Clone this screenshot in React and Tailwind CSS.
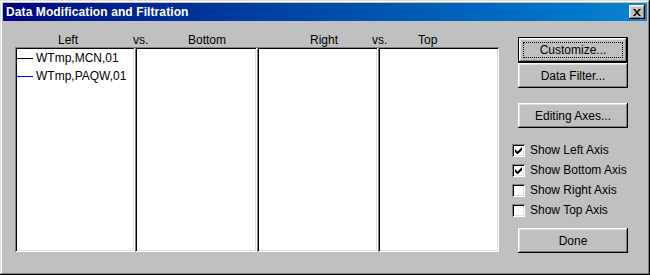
import React from "react";

const raised =
  "shadow-[inset_-1px_-1px_#000,inset_1px_1px_#fff,inset_-2px_-2px_#808080,inset_2px_2px_#dfdfdf]";
const sunken =
  "shadow-[inset_1px_1px_#808080,inset_-1px_-1px_#fff,inset_2px_2px_#000,inset_-2px_-2px_#dfdfdf]";

function Button({ children, isDefault, className = "" }) {
  if (isDefault) {
    return (
      <div className={`w-[110px] h-[26px] border border-black ${className}`}>
        <div className={`h-full bg-[#c0c0c0] ${raised} p-[4px]`}>
          <div className="h-full border border-dotted border-black flex items-center justify-center">
            {children}
          </div>
        </div>
      </div>
    );
  }
  return (
    <div
      className={`w-[110px] h-[25px] bg-[#c0c0c0] ${raised} flex items-center justify-center ${className}`}
    >
      {children}
    </div>
  );
}

function Check({ label, checked }) {
  return (
    <div className="h-[20px] flex items-center gap-[5px]">
      <div className={`w-[13px] h-[13px] bg-white ${sunken} flex items-center justify-center`}>
        {checked && (
          <svg width="7" height="7" viewBox="0 0 7 7">
            <path d="M0 2v3l2 2h1l4-4V0L2.5 4.5z" fill="#000" />
          </svg>
        )}
      </div>
      <span>{label}</span>
    </div>
  );
}

function ListBox({ w, children }) {
  return (
    <div className={`${w} h-[205px] bg-white ${sunken} pt-[2px] pl-[2px]`}>{children}</div>
  );
}

export default function App() {
  return (
    <div
      className="w-[650px] h-[275px] bg-[#c0c0c0] p-[3px] text-[12px] text-black shadow-[inset_-1px_-1px_#000,inset_1px_1px_#dfdfdf,inset_-2px_-2px_#808080,inset_2px_2px_#fff] flex flex-col"
      style={{ fontFamily: '"Liberation Sans", Arial, sans-serif' }}
    >
      <div className="h-[18px] bg-gradient-to-r from-[#000080] to-[#1084d0] flex items-center justify-between pl-[3px] pr-[2px]">
        <span className="text-white font-bold text-[12px] tracking-[0.1px]">
          Data Modification and Filtration
        </span>
        <div className={`w-[16px] h-[14px] bg-[#c0c0c0] ${raised} flex items-center justify-center`}>
          <svg width="8" height="7" viewBox="0 0 8 7">
            <path d="M0 0h2l2 2.5L6 0h2L5 3.5 8 7H6L4 4.5 2 7H0l3-3.5z" fill="#000" />
          </svg>
        </div>
      </div>

      <div className="flex pl-[12px] pt-[12px]">
        <div className="w-[484px]">
          <div className="h-[14px] flex leading-[14px]">
            <span className="w-[118px] pl-[43px]">Left</span>
            <span className="w-[55px]">vs.</span>
            <span className="w-[122px]">Bottom</span>
            <span className="w-[62px]">Right</span>
            <span className="w-[46px]">vs.</span>
            <span>Top</span>
          </div>
          <div className="flex">
            <ListBox w="w-[120px]">
              <div className="h-[18px] flex items-center gap-[3px]">
                <div className="w-[16px] h-px bg-black" />
                <span>WTmp,MCN,01</span>
              </div>
              <div className="h-[18px] flex items-center gap-[3px]">
                <div className="w-[16px] h-px bg-[#0000ff]" />
                <span>WTmp,PAQW,01</span>
              </div>
            </ListBox>
            <ListBox w="w-[122px]" />
            <ListBox w="w-[121px]" />
            <ListBox w="w-[121px]" />
          </div>
        </div>

        <div className="ml-[13px] pt-[4px] flex flex-col">
          <Button isDefault className="ml-[6px]">Customize...</Button>
          <Button className="ml-[6px]">Data Filter...</Button>
          <Button className="ml-[6px] mt-[15px]">Editing Axes...</Button>
          <div className="mt-[12px] flex flex-col">
            <Check label="Show Left Axis" checked />
            <Check label="Show Bottom Axis" checked />
            <Check label="Show Right Axis" />
            <Check label="Show Top Axis" />
          </div>
          <Button className="ml-[6px] mt-[8px]">Done</Button>
        </div>
      </div>
    </div>
  );
}
